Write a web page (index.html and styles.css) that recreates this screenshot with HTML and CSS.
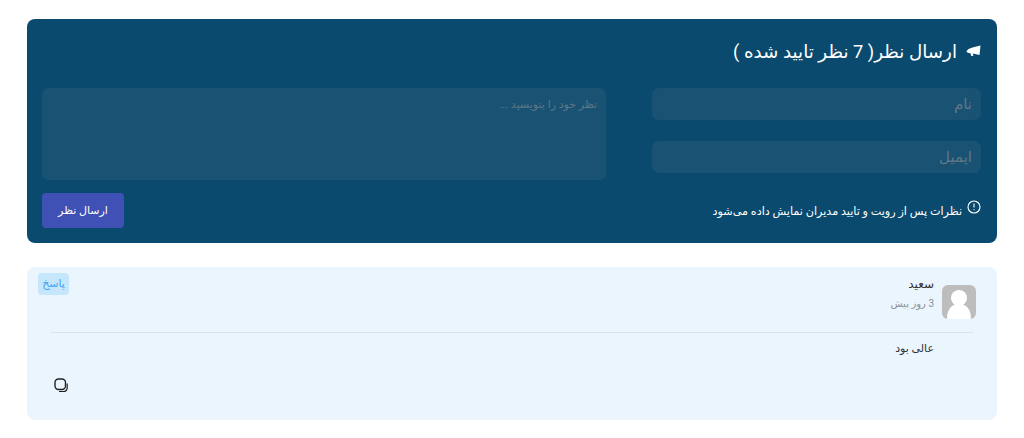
FILE: index.html
```html
<!DOCTYPE html>
<html lang="fa" dir="rtl">
<head>
    <meta charset="UTF-8">
    <title>ارسال نظر</title>
    <link rel="stylesheet" href="styles.css">
</head>
<body>
    <section class="form-card">
        <h2 class="form-title">
            <svg class="title-icon" viewBox="0 0 15 12" width="15" height="12"><path d="M14.500.5 6.500 2.500 2.500 4 .4 6.200l1.300 1.500 2.600.5 1.100 2.900h1.900l-.5-2.500 6.700 1.300z" fill="#fff"/></svg>
            <span>ارسال نظر( 7 نظر تایید شده )</span>
        </h2>
        <div class="form-grid">
            <div class="form-col-inputs">
                <input class="field" type="text" placeholder="نام">
                <input class="field" type="text" placeholder="ایمیل">
            </div>
            <textarea class="field field-text" placeholder="نظر خود را بنویسید ..."></textarea>
        </div>
        <div class="form-foot">
            <p class="note">
                <svg class="note-icon" viewBox="0 0 14 14" width="14" height="14"><circle cx="7" cy="7" r="6" fill="none" stroke="#fff" stroke-width="1.100"/><path d="M7 3.600v4M7 9.300v1" stroke="#fff" stroke-width="1.100" fill="none"/></svg>
                <span>نظرات پس از رویت و تایید مدیران نمایش داده می‌شود</span>
            </p>
            <button class="send-btn" type="button">ارسال نظر</button>
        </div>
    </section>

    <section class="comment">
        <div class="comment-head">
            <div class="avatar">
                <svg viewBox="0 0 34 34" width="34" height="34"><circle cx="17" cy="13" r="8" fill="#fff"/><path d="M5 34c0-9 4-15 12-15s12 6 12 15z" fill="#fff"/></svg>
            </div>
            <div class="comment-meta">
                <div class="comment-name">سعید</div>
                <div class="comment-date">3 روز پیش</div>
            </div>
            <a class="reply-btn">پاسخ</a>
        </div>
        <hr class="comment-line">
        <div class="comment-body">عالی بود</div>
        <div class="comment-foot">
            <svg viewBox="0 0 16 16" width="16" height="16"><rect x="2" y="2" width="10.500" height="10.500" rx="3.500" fill="none" stroke="#222" stroke-width="1.400"/><path d="M14.200 6.500v4.500a3.500 3.500 0 0 1-3.500 3.500H6" fill="none" stroke="#222" stroke-width="1.200"/></svg>
        </div>
    </section>
</body>
</html>
```

FILE: styles.css
```css
* {
    box-sizing: border-box;
}
body {
    font-family: 'Roboto', 'DejaVu Sans', sans-serif;
    background-color: #fff;
    margin: 0;
    padding: 19px 27px 0 27px;
    color: #333;
}
.form-card {
    height: 224px;
    background-color: #0b4a6f;
    border-radius: 8px;
    padding: 20px 16px 15px 15px;
    color: #fff;
}
.form-title {
    display: flex;
    align-items: center;
    gap: 9px;
    margin: 0 0 25px 0;
    height: 24px;
    font-size: 18.300px;
    font-weight: normal;
}
.form-grid {
    display: flex;
    justify-content: space-between;
}
.form-col-inputs {
    width: 329px;
    display: flex;
    flex-direction: column;
    gap: 21px;
}
.field {
    display: block;
    width: 100%;
    height: 32px;
    padding: 0 9px;
    border: none;
    border-radius: 7px;
    background-color: #195273;
    font-family: inherit;
    font-size: 15px;
    color: #fff;
}
.field::placeholder {
    color: #5f7686;
}
.field-text {
    width: 564px;
    height: 92px;
    padding: 10px 9px;
    font-size: 11px;
    resize: none;
}
.form-foot {
    display: flex;
    justify-content: space-between;
    margin-top: 13px;
}
.note {
    display: flex;
    align-items: center;
    gap: 5px;
    margin: 0;
    font-size: 11.200px;
}
.note-icon {
    margin-top: -7px;
}
.note span {
    margin-top: 2px;
}
.send-btn {
    width: 82px;
    height: 35px;
    background-color: #3f51b5;
    border: none;
    border-radius: 4px;
    color: #fff;
    font-family: inherit;
    font-size: 11px;
}
.comment {
    height: 153px;
    margin-top: 24px;
    background-color: #eaf5fe;
    border-radius: 8px;
    padding: 6px 21px 0 11px;
}
.comment-head {
    display: flex;
    align-items: flex-start;
    height: 59px;
    padding-top: 12px;
    position: relative;
}
.avatar {
    width: 34px;
    height: 34px;
    background-color: #bdbdbd;
    border-radius: 6px;
    overflow: hidden;
}
.comment-meta {
    margin-right: 8px;
    margin-top: -10px;
}
.comment-name {
    font-size: 12px;
    line-height: 18px;
}
.comment-date {
    margin-top: 2px;
    font-size: 10px;
    line-height: 18px;
    color: #8a8f94;
}
.reply-btn {
    position: absolute;
    top: 0;
    left: 0;
    width: 31px;
    height: 22px;
    background-color: #c6e6fb;
    border-radius: 4px;
    color: #42a5f5;
    font-size: 11px;
    line-height: 21px;
    text-align: center;
}
.comment-line {
    height: 1px;
    margin: 0 3px 0 13px;
    border: none;
    background-color: #d8e3ea;
}
.comment-body {
    margin-top: 7px;
    padding-right: 42px;
    font-size: 11px;
    line-height: 18px;
}
.comment-foot {
    display: flex;
    justify-content: flex-end;
    margin: 19px 0 0 0;
    padding-left: 15px;
}
```
